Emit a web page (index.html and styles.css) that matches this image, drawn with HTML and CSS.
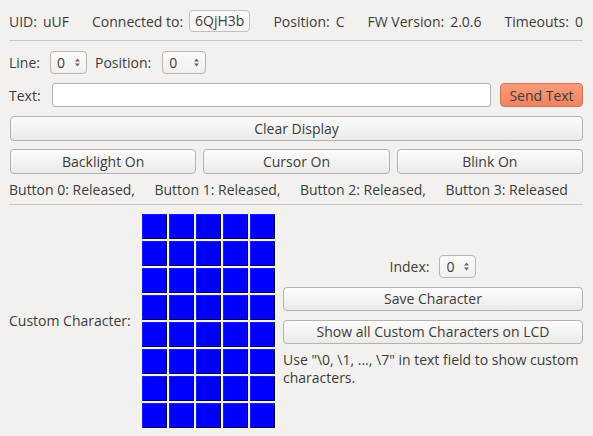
FILE: index.html
```html
<!DOCTYPE html>
<html>
<head>
<meta charset="utf-8">
<link rel="stylesheet" href="styles.css">
</head>
<body>
<div class="app">
  <div class="top">
    <div class="pair"><span>UID:</span><span>uUF</span></div>
    <div class="pair"><span>Connected to:</span><span class="link">6QjH3b</span></div>
    <div class="pair"><span>Position:</span><span>C</span></div>
    <div class="pair"><span>FW Version:</span><span>2.0.6</span></div>
    <div class="pair"><span>Timeouts:</span><span>0</span></div>
  </div>
  <div class="sep sep-top"></div>

  <div class="row line-row">
    <span>Line:</span>
    <div class="spin"><span>0</span><span class="arrows"><svg width="7" height="11" viewBox="0 0 7 11"><path d="M1 4.5 L3.5 1.5 L6 4.5 Z" fill="#666"/><path d="M1 6.5 L3.5 9.5 L6 6.5 Z" fill="#666"/></svg></span></div>
    <span class="pos-label">Position:</span>
    <div class="spin spin-pos"><span>0</span><span class="arrows"><svg width="7" height="11" viewBox="0 0 7 11"><path d="M1 4.5 L3.5 1.5 L6 4.5 Z" fill="#666"/><path d="M1 6.5 L3.5 9.5 L6 6.5 Z" fill="#666"/></svg></span></div>
  </div>

  <div class="row text-row">
    <span class="text-label">Text:</span>
    <div class="input"></div>
    <div class="btn btn-send">Send Text</div>
  </div>

  <div class="btn btn-clear">Clear Display</div>

  <div class="three">
    <div class="btn">Backlight On</div>
    <div class="btn">Cursor On</div>
    <div class="btn">Blink On</div>
  </div>

  <div class="status">
    <span>Button 0: Released,</span>
    <span>Button 1: Released,</span>
    <span>Button 2: Released,</span>
    <span>Button 3: Released</span>
  </div>
  <div class="sep sep-mid"></div>

  <div class="custom">
    <div class="custom-label">Custom Character:</div>
    <div class="grid" id="grid"></div>
    <div class="right">
      <div class="index-row">
        <span>Index:</span>
        <div class="spin spin-idx"><span>0</span><span class="arrows"><svg width="7" height="11" viewBox="0 0 7 11"><path d="M1 4.5 L3.5 1.5 L6 4.5 Z" fill="#666"/><path d="M1 6.5 L3.5 9.5 L6 6.5 Z" fill="#666"/></svg></span></div>
      </div>
      <div class="btn btn-wide">Save Character</div>
      <div class="btn btn-wide btn-show">Show all Custom Characters on LCD</div>
      <div class="hint">Use "\0, \1, ..., \7" in text field to show custom<br>characters.</div>
    </div>
  </div>
</div>
<script src="script.js"></script>
</body>
</html>
```
FILE: script.js
```js
var g = document.getElementById('grid');
for (var i = 0; i < 40; i++) {
  var c = document.createElement('div');
  c.className = 'cell';
  g.appendChild(c);
}
```
FILE: styles.css
```css
html, body {
  margin: 0;
  padding: 0;
  background: #f2f1f0;
}
body {
  font-family: "Open Sans", "DejaVu Sans", sans-serif;
  font-size: 14px;
  color: #3c3c3c;
  width: 593px;
  height: 436px;
  overflow: hidden;
}
.app {
  padding: 10px 10px 0 9px;
  display: flex;
  flex-direction: column;
}
.top {
  display: flex;
  justify-content: space-between;
  align-items: center;
  height: 22px;
}
.pair {
  display: flex;
  align-items: center;
  gap: 6px;
}
.link {
  border: 1px solid #c3bfbb;
  border-radius: 4px;
  background: #f8f7f6;
  height: 20px;
  line-height: 20px;
  padding: 0 5px;
}
.sep {
  height: 1px;
  background: #c9c6c3;
}
.sep-top { margin-top: 8px; }
.row {
  display: flex;
  align-items: center;
}
.line-row {
  margin-top: 10px;
  height: 22px;
}
.spin {
  box-sizing: border-box;
  height: 23px;
  width: 37px;
  border: 1px solid #b9b5b1;
  border-radius: 4px;
  background: linear-gradient(#fbfbfa, #f1f0ef);
  display: flex;
  align-items: center;
  justify-content: space-between;
  padding: 0 5px 0 6px;
  margin-left: 10px;
}
.arrows { display: flex; align-items: center; }
.pos-label { margin-left: 8px; }
.spin-pos { width: 44px; margin-left: 11px; }
.text-row {
  margin-top: 10px;
  height: 24px;
}
.input {
  box-sizing: border-box;
  margin-left: 11px;
  flex: 1;
  height: 24px;
  background: #fff;
  border: 1px solid #b3afab;
  border-radius: 3px;
}
.btn {
  box-sizing: border-box;
  height: 25px;
  border: 1px solid #b6b2ae;
  border-radius: 4px;
  background: linear-gradient(#fcfcfc, #ecebea);
  display: flex;
  align-items: center;
  justify-content: center;
}
.btn-send {
  margin-left: 9px;
  width: 83px;
  height: 24px;
  border-color: #c97757;
  background: linear-gradient(#f99b7a, #ef8460);
  color: #3c3c3c;
}
.btn-clear {
  margin-top: 9px;
  margin-left: 1px;
}
.three {
  margin-top: 8px;
  margin-left: 1px;
  display: grid;
  grid-template-columns: 1fr 1fr 1fr;
  gap: 7px;
}
.status {
  margin-top: 4px;
  height: 22px;
  display: flex;
  gap: 19.5px;
  align-items: center;
  white-space: nowrap;
}
.sep-mid { margin-top: 4px; }
.custom {
  margin-top: 8px;
  display: flex;
  align-items: center;
}
.custom-label {
  width: 133px;
  white-space: nowrap;
}
.grid {
  display: grid;
  grid-template-columns: repeat(5, 25px);
  grid-auto-rows: 25px;
  gap: 2px;
  margin-top: 1px;
}
.cell {
  box-sizing: border-box;
  background: #0000ff;
  border-right: 1px solid #00004a;
  border-bottom: 1px solid #00004a;
  border-top: 1px solid #1a1aff;
  border-left: 1px solid #1a1aff;
}
.right {
  margin-left: 8px;
  flex: 1;
  display: flex;
  flex-direction: column;
}
.index-row {
  display: flex;
  justify-content: center;
  align-items: center;
  height: 23px;
}
.spin-idx { margin-left: 10px; }
.btn-wide { margin-top: 9px; height: 24px; }
.btn-show { margin-top: 9px; }
.hint {
  margin-top: 7px;
  line-height: 18px;
  white-space: nowrap;
}
```
